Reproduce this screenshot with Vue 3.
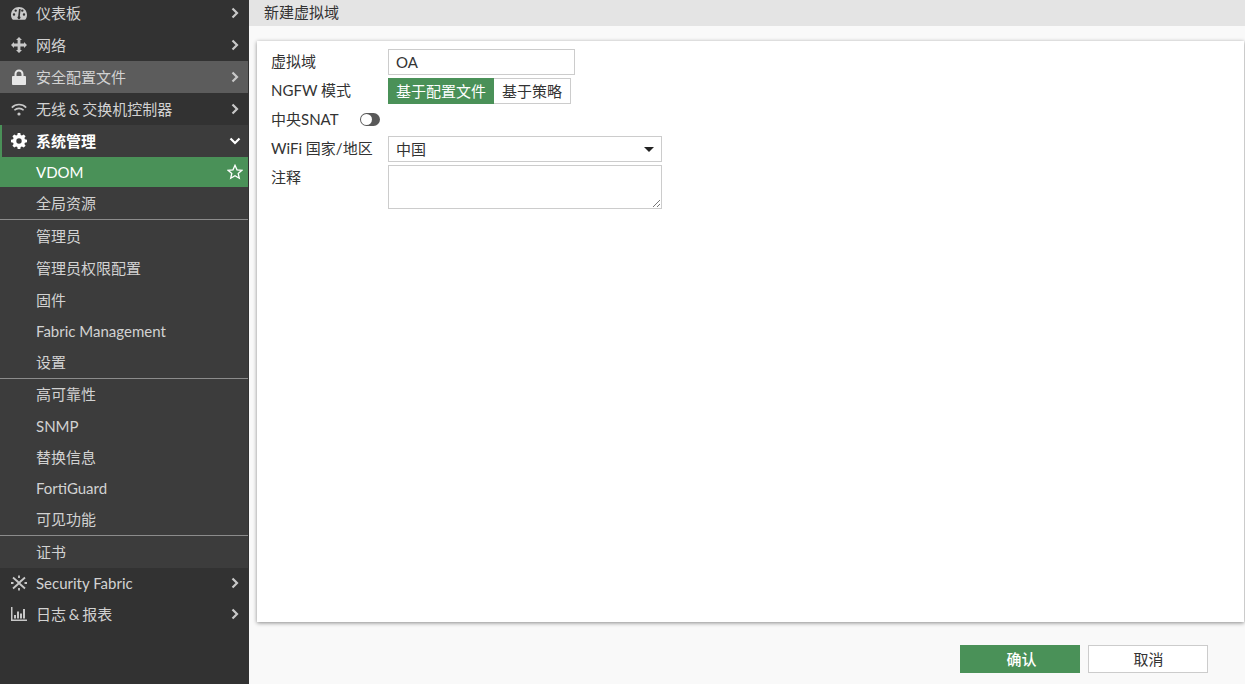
<script setup>
const topItems = [
  { label: '仪表板', icon: 'gauge' },
  { label: '网络', icon: 'move' },
  { label: '安全配置文件', icon: 'lock', hover: true },
  { label: '无线 & 交换机控制器', icon: 'wifi', tight: true }
]
const groups = [
  ['全局资源'],
  ['管理员', '管理员权限配置', '固件', 'Fabric Management', '设置'],
  ['高可靠性', 'SNMP', '替换信息', 'FortiGuard', '可见功能'],
  ['证书']
]
const bottomItems = [
  { label: 'Security Fabric', icon: 'fabric' },
  { label: '日志 & 报表', icon: 'chart', tight: true }
]
</script>

<template>
  <div class="page">
    <aside class="sidebar">
      <div v-for="item in topItems" :key="item.label" class="row" :class="{ hover: item.hover }">
        <span class="ico">
          <svg v-if="item.icon === 'gauge'" width="16" height="13" viewBox="0 0 16 13"><path fill="#c8c8c8" fill-rule="evenodd" d="M8 0C3.600 0 0 3.300 0 7.800c0 1.700.5 3.200 1.300 4.400.2.300.5.500.9.500h11.600c.4 0 .7-.2.900-.5.800-1.200 1.300-2.700 1.300-4.400C16 3.300 12.400 0 8 0zM3 8.700a1.200 1.200 0 1 1 0-2.400 1.200 1.200 0 0 1 0 2.400zm1.700-3.900a1.200 1.200 0 1 1 0-2.400 1.200 1.200 0 0 1 0 2.400zM9.700 2l-.9 7.300a1.500 1.500 0 1 1-1.600 0L8 2h1.700zm1.600 2.800a1.200 1.200 0 1 1 0-2.400 1.200 1.200 0 0 1 0 2.400zM13 8.700a1.200 1.200 0 1 1 0-2.400 1.200 1.200 0 0 1 0 2.400z"/></svg>
          <svg v-else-if="item.icon === 'move'" width="16" height="16" viewBox="0 0 16 16"><path fill="#c8c8c8" d="M8 0l3 3H9.400v3.600H13V5l3 3-3 3V9.400H9.400V13H11l-3 3-3-3h1.600V9.400H3V11L0 8l3-3v1.600h3.600V3H5z"/></svg>
          <svg v-else-if="item.icon === 'lock'" width="14" height="16" viewBox="0 0 14 16"><path fill="#e6e6e6" fill-rule="evenodd" d="M2.500 7V5a4.500 4.500 0 0 1 9 0v2h1.400c.6 0 1.100.5 1.100 1.100v6.800c0 .6-.5 1.100-1.100 1.100H1.100C.5 16 0 15.500 0 14.900V8.100C0 7.500.5 7 1.100 7zm2 0h5V5a2.500 2.500 0 0 0-5 0z"/></svg>
          <svg v-else width="16" height="13" viewBox="0 0 16 13"><g fill="none" stroke="#c8c8c8" stroke-width="1.600"><path d="M.8 4.600a10 10 0 0 1 14.400 0"/><path d="M3.400 7.300a6.400 6.400 0 0 1 9.200 0"/></g><circle cx="8" cy="11" r="1.600" fill="#c8c8c8"/></svg>
        </span>
        <span class="label" :class="{ tight: item.tight }">{{ item.label }}</span>
        <svg class="chev" width="8" height="12" viewBox="0 0 8 12"><path d="M1.500 1.500L6 6l-4.500 4.500" fill="none" stroke="#c8c8c8" stroke-width="2.200"/></svg>
      </div>

      <div class="row open">
        <span class="ico">
          <svg width="16" height="16" viewBox="0 0 16 16"><path fill="#fff" fill-rule="evenodd" d="M6.700 0h2.600l.4 2.100 1.200.5L12.700 1.400l1.900 1.900-1.200 1.800.5 1.200 2.100.4v2.600l-2.100.4-.5 1.200 1.200 1.800-1.900 1.900-1.800-1.200-1.200.5-.4 2.100H6.700l-.4-2.100-1.200-.5-1.800 1.200-1.900-1.900 1.200-1.800-.5-1.200L0 9.300V6.700l2.100-.4.500-1.200-1.200-1.800 1.900-1.900 1.800 1.200 1.200-.5zM8 5.300a2.700 2.700 0 1 0 0 5.400 2.700 2.700 0 0 0 0-5.400z"/></svg>
        </span>
        <span class="label">系统管理</span>
        <svg class="chev down" width="12" height="8" viewBox="0 0 12 8"><path d="M1.500 1.500L6 6l4.500-4.500" fill="none" stroke="#fff" stroke-width="2.200"/></svg>
      </div>

      <div class="submenu">
        <div class="sub active">
          <span>VDOM</span>
          <svg class="star" width="16" height="16" viewBox="0 0 16 16"><path fill="none" stroke="#fff" stroke-width="1.300" d="M8 1.300l2 4.500 4.900.5-3.700 3.200 1.100 4.800L8 11.800l-4.300 2.500 1.100-4.800-3.700-3.200 4.900-.5z"/></svg>
        </div>
        <div v-for="(g, i) in groups" :key="i" class="group">
          <div v-for="s in g" :key="s" class="sub">{{ s }}</div>
        </div>
      </div>

      <div v-for="item in bottomItems" :key="item.label" class="row low">
        <span class="ico">
          <svg v-if="item.icon === 'fabric'" width="16" height="16" viewBox="0 0 16 16"><g stroke="#c8c8c8" stroke-width="1.800" fill="none"><path d="M2 2.500l4.500 4M9.500 9.500l4.500 4M14 2.500l-4.500 4M6.500 9.500L2 13.500M6 6l4 4M10 6l-4 4"/><path d="M0 8h2.500M13.500 8H16M8 .5V3M8 13v2.500"/></g></svg>
          <svg v-else width="16" height="14" viewBox="0 0 16 14"><path fill="#c8c8c8" d="M0 0h1.500v12.500H16V14H0zM3 8h2v3.500H3zM6 4.500h2v7H6zM9 6.500h2v5H9zM12 2h2v9.500h-2z"/></svg>
        </span>
        <span class="label" :class="{ tight: item.tight }">{{ item.label }}</span>
        <svg class="chev" width="8" height="12" viewBox="0 0 8 12"><path d="M1.500 1.500L6 6l-4.500 4.500" fill="none" stroke="#c8c8c8" stroke-width="2.200"/></svg>
      </div>
    </aside>

    <main class="main">
      <header class="title">新建虚拟域</header>
      <section class="card">
        <div class="field">
          <label>虚拟域</label>
          <div class="input short">OA</div>
        </div>
        <div class="field mode">
          <label>NGFW 模式</label>
          <div class="toggle">
            <span class="opt on">基于配置文件</span>
            <span class="opt">基于策略</span>
          </div>
        </div>
        <div class="field snat">
          <label>中央SNAT</label>
          <span class="switch"><i></i></span>
        </div>
        <div class="field">
          <label>WiFi 国家/地区</label>
          <div class="input wide select">
            <span>中国</span>
            <b class="caret"></b>
          </div>
        </div>
        <div class="field">
          <label>注释</label>
          <div class="input wide area">
            <svg class="grip" width="10" height="10" viewBox="0 0 10 10"><path d="M9 2L2 9M9 6L6 9" stroke="#777" stroke-width="1" fill="none"/></svg>
          </div>
        </div>
      </section>
      <footer class="actions">
        <button class="btn primary">确认</button>
        <button class="btn">取消</button>
      </footer>
    </main>
  </div>
</template>

<style>
html, body { margin: 0; padding: 0; overflow: hidden; }
</style>

<style scoped>
.page {
  display: flex;
  width: 1245px;
  height: 684px;
  overflow: hidden;
  font-family: Lato, "Noto Sans CJK SC", sans-serif;
  font-size: 15px;
}
.sidebar {
  width: 249px;
  flex: none;
  background: #323232;
  color: #d2d2d2;
  overflow: hidden;
  box-sizing: border-box;
}
.sidebar > :first-child { margin-top: -3px; }
.row {
  height: 32px;
  line-height: 30px;
  display: flex;
  align-items: center;
  padding-left: 11px;
  padding-right: 9px;
  box-sizing: border-box;
  width: 248px;
}
.row.low { height: 31px; padding-bottom: 2px; }
.row.hover { background: #5c5c5c; }
.row.open {
  background: #3c3c3c;
  border-left: 2px solid #4a9158;
  padding-left: 9px;
  color: #fff;
  font-weight: 700;
}
.ico {
  width: 16px;
  margin-right: 9px;
  display: flex;
  justify-content: center;
  align-items: center;
  flex: none;
}
.label { flex: 1; white-space: nowrap; }
.label.tight { word-spacing: -1px; }
.chev.down { margin-right: -2px; }
.submenu { background: #3c3c3c; width: 248px; }
.sub {
  height: 31px;
  line-height: 30px;
  padding-left: 36px;
  box-sizing: border-box;
}
.group .sub:first-child { height: 32px; line-height: 32px; }
.group:nth-child(3) .sub:nth-child(-n+3) { height: 32px; line-height: 32px; }
.group:nth-child(4) .sub:first-child { line-height: 30px; }
.sub.active {
  height: 30px;
  background: #4a9158;
  color: #fff;
  display: flex;
  justify-content: space-between;
  align-items: center;
  padding-right: 5px;
}
.group { border-bottom: 1px solid #8c8c8c; }
.group:last-child { border-bottom: 0; }
.main {
  flex: 1;
  background: #f9f9f9;
  display: flex;
  flex-direction: column;
  min-width: 0;
  color: #333;
}
.title {
  height: 26px;
  line-height: 25px;
  background: #e4e4e4;
  padding-left: 15px;
}
.card {
  height: 581px;
  margin: 15px 1px 0 8px;
  background: #fff;
  box-shadow: 0 1px 4px rgba(0, 0, 0, .45);
  box-sizing: border-box;
  padding: 8px 14px;
}
.field {
  display: flex;
  align-items: flex-start;
  margin-bottom: 3px;
}
.field label {
  width: 117px;
  flex: none;
  line-height: 24px;
  height: 26px;
}
.input {
  border: 1px solid #ccc;
  background: #fff;
  box-sizing: border-box;
  height: 26px;
  line-height: 25px;
  padding-left: 7px;
}
.short { width: 187px; }
.wide { width: 274px; }
.select {
  display: flex;
  align-items: center;
  justify-content: space-between;
  padding-right: 7px;
}
.caret {
  width: 0;
  height: 0;
  border-left: 5px solid transparent;
  border-right: 5px solid transparent;
  border-top: 5px solid #222;
}
.area { height: 44px; position: relative; }
.grip { position: absolute; right: 0; bottom: 0; }
.toggle { display: flex; height: 26px; }
.opt {
  border: 1px solid #ccc;
  border-left: 0;
  padding: 0 8px;
  line-height: 24px;
  box-sizing: border-box;
  white-space: nowrap;
}
.opt.on {
  background: #4a9158;
  color: #fff;
  border-color: #4a9158;
  padding-right: 7px;
}
.switch {
  width: 20px;
  height: 13px;
  margin: 6px 0 0 -28px;
  border-radius: 7px;
  background: #595959;
  position: relative;
}
.switch i {
  position: absolute;
  left: 1px;
  top: 1px;
  width: 11px;
  height: 11px;
  border-radius: 50%;
  background: #fff;
}
.actions {
  flex: 1;
  display: flex;
  justify-content: flex-end;
  align-items: flex-start;
  gap: 8px;
  padding: 23px 37px 0 0;
}
.btn {
  width: 120px;
  height: 28px;
  border: 1px solid #ccc;
  background: #fff;
  color: #333;
  font: inherit;
  padding: 0 0 2px 1px;
}
.btn.primary {
  background: #4a9158;
  border-color: #4a9158;
  color: #fff;
  font-weight: 500;
  padding-left: 3px;
}
</style>
